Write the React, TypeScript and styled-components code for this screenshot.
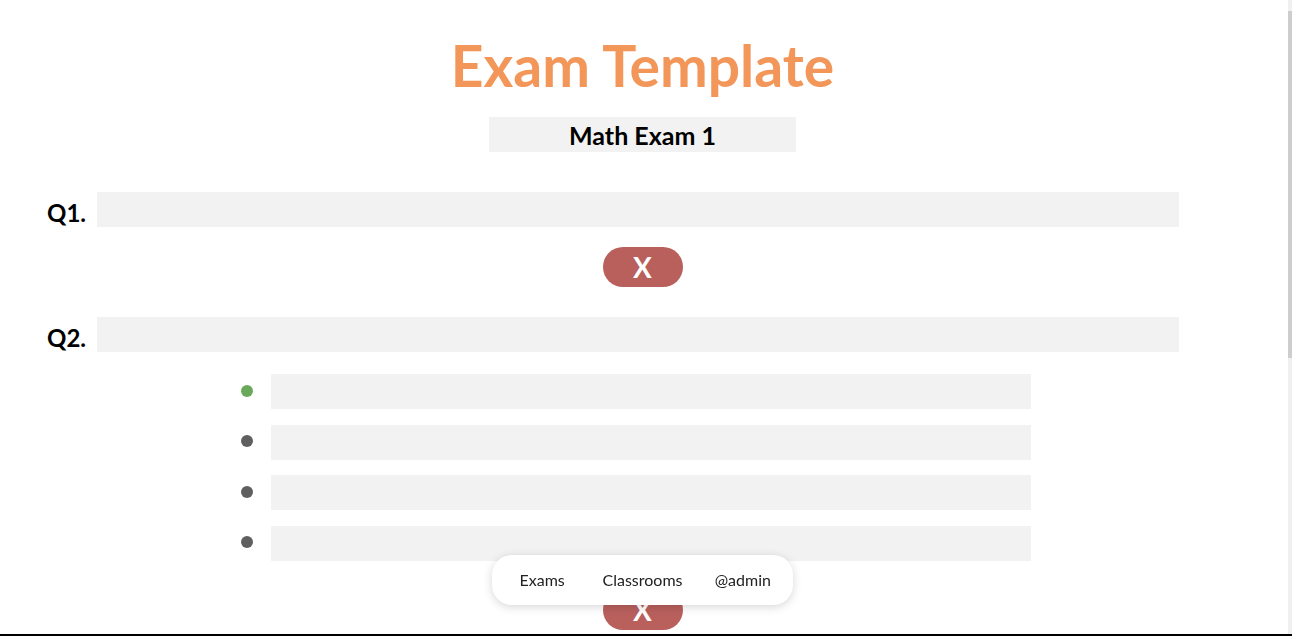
import React, { useLayoutEffect, useRef } from "react";
import styled, { createGlobalStyle } from "styled-components";

const Global = createGlobalStyle`
  html, body { margin: 0; padding: 0; background: #fff; overflow: hidden; }
  * { box-sizing: border-box; }
  body { font-family: Lato, "Noto Sans", sans-serif; }
`;

const Shell = styled.div`
  display: flex;
  height: 636px;
  border-bottom: 2px solid #000;
`;

const Scroller = styled.div`
  flex: 1;
  min-width: 0;
  overflow-y: auto;
  scrollbar-width: none;
  &::-webkit-scrollbar { display: none; }
`;

const ScrollRail = styled.div`
  width: 4px;
  flex: none;
  background: #f0f0f0;
  padding-top: 11px;
`;

const ScrollThumb = styled.div`
  height: 347px;
  background: #cdcdcd;
`;

const Page = styled.main`
  display: flex;
  flex-direction: column;
  align-items: center;
  padding: 52px 3px 508px 0;
`;

const Title = styled.h1`
  margin: 0;
  font-family: Lato, sans-serif;
  font-weight: 700;
  font-size: 57px;
  line-height: 67px;
  color: #f3965a;
`;

const NameInput = styled.input`
  margin-top: 18px;
  width: 307px;
  height: 35px;
  border: none;
  outline: none;
  background: #f2f2f2;
  font-family: Lato, sans-serif;
  font-weight: 700;
  font-size: 25px;
  color: #000;
  text-align: center;
  padding: 0;
`;

const Question = styled.section<{ $first?: boolean }>`
  align-self: stretch;
  display: flex;
  flex-direction: column;
  align-items: center;
  margin-top: ${(p) => (p.$first ? "40px" : "30px")};
`;

const QRow = styled.div`
  align-self: stretch;
  display: flex;
  align-items: center;
  gap: 10px;
  padding-left: 47px;
`;

const QLabel = styled.label`
  width: 40px;
  font-family: Lato, sans-serif;
  font-weight: 700;
  font-size: 24px;
  color: #000;
  padding-top: 5px;
`;

const Field = styled.input<{ $w: number }>`
  width: ${(p) => p.$w}px;
  height: 35px;
  border: none;
  outline: none;
  background: #f2f2f2;
  padding: 0 8px;
  font-family: Lato, sans-serif;
  font-size: 18px;
`;

const Options = styled.ul`
  align-self: stretch;
  list-style: none;
  margin: 22px 0 0;
  padding: 0 0 0 241px;
  display: flex;
  flex-direction: column;
  gap: 15.67px;
`;

const Option = styled.li`
  display: flex;
  align-items: center;
  gap: 18px;
`;

const Dot = styled.span<{ $correct?: boolean }>`
  width: 12px;
  height: 12px;
  border-radius: 50%;
  margin-top: -2px;
  background: ${(p) => (p.$correct ? "#6aa95a" : "#5f5f5f")};
`;

const RemoveButton = styled.button<{ $mt: number }>`
  margin-top: ${(p) => p.$mt}px;
  width: 80px;
  height: 40px;
  border: none;
  border-radius: 20px;
  background: #b9605d;
  color: #fff;
  font-family: Lato, sans-serif;
  font-weight: 700;
  font-size: 28px;
  line-height: 40px;
  padding: 0;
  cursor: pointer;
`;

const NavLayer = styled.div`
  position: fixed;
  left: 0;
  right: 7px;
  bottom: 31px;
  display: flex;
  justify-content: center;
  pointer-events: none;
`;

const Nav = styled.nav`
  pointer-events: auto;
  width: 301px;
  height: 50px;
  background: #fff;
  border-radius: 20px;
  box-shadow: 0 2px 10px rgba(0, 0, 0, 0.16);
  display: flex;
  align-items: center;
`;

const NavItem = styled.a`
  flex: 1;
  text-align: center;
  font-family: Lato, sans-serif;
  font-size: 16px;
  color: #222;
  text-decoration: none;
  cursor: pointer;
  padding-bottom: 1px;
`;

export default function App() {
  const ref = useRef<HTMLDivElement>(null);
  useLayoutEffect(() => {
    if (ref.current) ref.current.scrollTop = 20;
  }, []);
  return (
    <>
      <Global />
      <Shell>
        <Scroller ref={ref}>
          <Page>
            <Title>Exam Template</Title>
            <NameInput defaultValue="Math Exam 1" />
            <Question $first>
              <QRow>
                <QLabel>Q1.</QLabel>
                <Field $w={1082} />
              </QRow>
              <RemoveButton $mt={20}>X</RemoveButton>
            </Question>
            <Question>
              <QRow>
                <QLabel>Q2.</QLabel>
                <Field $w={1082} />
              </QRow>
              <Options>
                <Option>
                  <Dot $correct />
                  <Field $w={760} />
                </Option>
                <Option>
                  <Dot />
                  <Field $w={760} />
                </Option>
                <Option>
                  <Dot />
                  <Field $w={760} />
                </Option>
                <Option>
                  <Dot />
                  <Field $w={760} />
                </Option>
              </Options>
              <RemoveButton $mt={29}>X</RemoveButton>
            </Question>
          </Page>
        </Scroller>
        <ScrollRail>
          <ScrollThumb />
        </ScrollRail>
      </Shell>
      <NavLayer>
        <Nav>
          <NavItem>Exams</NavItem>
          <NavItem>Classrooms</NavItem>
          <NavItem>@admin</NavItem>
        </Nav>
      </NavLayer>
    </>
  );
}
